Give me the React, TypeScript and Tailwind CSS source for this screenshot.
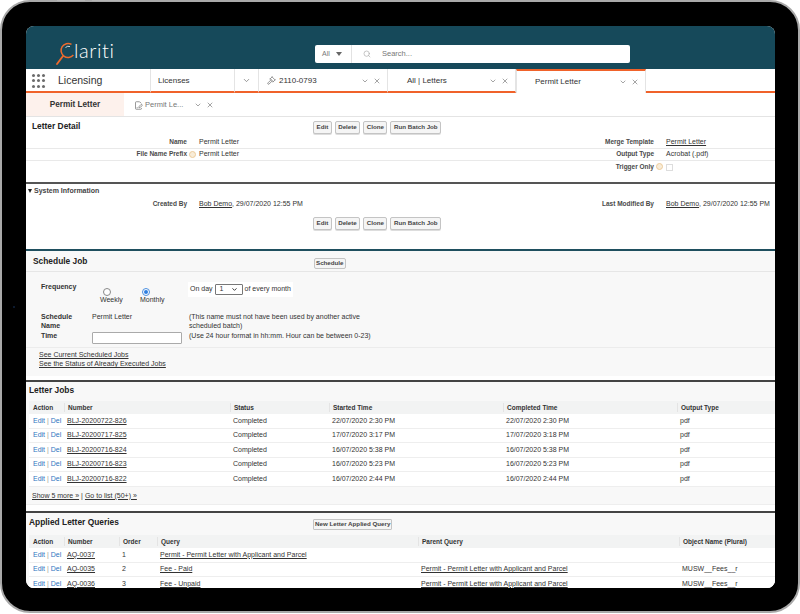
import { ChevronDown, Gavel, Search, X, FileSignature } from "lucide-react"

const jobs = [
  ["BLJ-20200722-826", "22/07/2020 2:30 PM", "22/07/2020 2:30 PM"],
  ["BLJ-20200717-825", "17/07/2020 3:17 PM", "17/07/2020 3:18 PM"],
  ["BLJ-20200716-824", "16/07/2020 5:38 PM", "16/07/2020 5:38 PM"],
  ["BLJ-20200716-823", "16/07/2020 5:23 PM", "16/07/2020 5:23 PM"],
  ["BLJ-20200716-822", "16/07/2020 2:44 PM", "16/07/2020 2:44 PM"],
]

const queries = [
  ["AQ-0037", "1", "Permit - Permit Letter with Applicant and Parcel", "", ""],
  ["AQ-0035", "2", "Fee - Paid", "Permit - Permit Letter with Applicant and Parcel", "MUSW__Fees__r"],
  ["AQ-0036", "3", "Fee - Unpaid", "Permit - Permit Letter with Applicant and Parcel", "MUSW__Fees__r"],
]

function Btn({ children }: { children: React.ReactNode }) {
  return (
    <button className="h-[13px] rounded-[2px] border border-[#c4c4c4] bg-[#f5f5f5] px-[2.5px] text-[6.2px] leading-none font-bold text-[#444] shadow-[0_1px_0_#ddd]">
      {children}
    </button>
  )
}

function ActionButtons() {
  return (
    <div className="flex gap-[3px] pl-[287px]">
      <Btn>Edit</Btn>
      <Btn>Delete</Btn>
      <Btn>Clone</Btn>
      <Btn>Run Batch Job</Btn>
    </div>
  )
}

function Help() {
  return <span className="h-[7px] w-[7px] rounded-full border border-[#eccb9a] bg-[#f8ecd8]" />
}

function Label({ children, help }: { children?: React.ReactNode; help?: boolean }) {
  return (
    <div className="flex w-[161px] shrink-0 items-center justify-end pb-[1px] text-[6.5px] font-bold text-[#4a4a4a]">
      {children}
      {help && (
        <span className="-mr-[9px] ml-[2px] flex">
          <Help />
        </span>
      )}
    </div>
  )
}

function DetailRow({ children, border = true }: { children: React.ReactNode; border?: boolean }) {
  return <div className={`flex h-[12px] items-center ${border ? "border-b border-[#e9e9e9]" : ""}`}>{children}</div>
}

function Tab({ label, icon, width, pad, active }: { label: string; icon?: React.ReactNode; width: string; pad: string; active?: boolean }) {
  return (
    <div
      className={`flex h-[24px] shrink-0 items-center gap-[3px] border-r border-[#e4e4e4] ${width} ${pad} ${
        active ? "border-l border-t-2 border-t-[#f0622a] bg-white" : "border-b-2 border-b-[#f0622a] pt-[1px]"
      }`}
    >
      {icon}
      <span className="flex-1 text-[8px] text-[#333]">{label}</span>
      <ChevronDown className="h-[8px] w-[8px] text-[#777]" />
      <X className="ml-[1px] mr-[6px] h-[8px] w-[8px] text-[#777]" />
    </div>
  )
}

function Link({ children }: { children: React.ReactNode }) {
  return <a className="text-[#333] underline">{children}</a>
}

function RowActions() {
  return (
    <span className="text-[#2f74c0]">
      Edit <span className="text-[#999]">|</span> Del
    </span>
  )
}

export default function App() {
  return (
    <div className="relative flex h-[614px] w-[800px] items-start overflow-hidden bg-white font-['Liberation_Sans',Arial,sans-serif] antialiased">
      {/* tablet frame */}
      <div className="h-[613px] w-[800px] rounded-[30px] border-2 border-[#a9a9a9] bg-black p-[24px]">
        <div className="flex h-[562px] w-[749px] flex-col overflow-hidden rounded-[8px] bg-white">
          <div className="flex h-[43px] shrink-0 items-start bg-[#16495a]">
            <div className="flex h-[43px] w-[289px] shrink-0 items-start pl-[29px] pt-[11px]">
              <svg width="20" height="30" viewBox="0 0 20 30" className="shrink-0">
                <path d="M16.5 7.4 A7 7 0 1 0 18.4 18" fill="none" stroke="#ee6a2c" strokeWidth="1.5" />
                <path d="M8 19 L2 27" stroke="#ee6a2c" strokeWidth="1.8" strokeLinecap="round" />
                <path d="M10.5 10.5 A4.5 4.5 0 0 1 15 9.5" fill="none" stroke="#fff" strokeWidth="0.8" />
              </svg>
              <span className="mt-[3px] -ml-[1px] text-[20px] leading-[20px] font-['Lato',sans-serif] font-light tracking-[0.6px] text-white">lariti</span>
            </div>
            <div className="mt-[19px] flex h-[18px] w-[315px] items-center rounded-[2px] bg-white">
              <div className="flex h-full w-[37px] items-center border-r border-[#e2e2e2] pl-[7px] text-[7px] text-[#777]">
                All
                <span className="ml-[6px] h-0 w-0 border-x-[3.5px] border-t-[4px] border-x-transparent border-t-[#666]" />
              </div>
              <Search className="ml-[11px] h-[8px] w-[8px] text-[#aaa]" />
              <span className="ml-[11px] text-[7.5px] text-[#777]">Search...</span>
            </div>
          </div>

          <div className="flex h-[24px] shrink-0 items-stretch">
            <div className="flex w-[125px] shrink-0 items-center border-r border-b-2 border-r-[#e4e4e4] border-b-[#f0622a] pt-[1px] pl-[6px]">
              <div className="grid w-[13px] grid-cols-3 gap-[2.5px]">
                {Array.from({ length: 9 }).map((_, i) => (
                  <span key={i} className="h-[3px] w-[3px] rounded-full bg-[#6b6b6b]" />
                ))}
              </div>
              <span className="ml-[13px] text-[10.5px] text-[#333]">Licensing</span>
            </div>
            <div className="flex w-[84px] shrink-0 items-center border-r border-b-2 border-r-[#e4e4e4] border-b-[#f0622a] pt-[1px] pl-[7px] text-[8px] text-[#333]">
              Licenses
            </div>
            <div className="flex w-[24px] shrink-0 items-center justify-center border-r border-b-2 border-r-[#e4e4e4] border-b-[#f0622a] pt-[1px]">
              <ChevronDown className="h-[9px] w-[9px] text-[#777]" />
            </div>
            <Tab label="2110-0793" width="w-[129px]" pad="pl-[8px]" icon={<Gavel className="h-[9px] w-[9px] text-[#777]" />} />
            <Tab label="All | Letters" width="w-[128px]" pad="pl-[19px]" />
            <Tab label="Permit Letter" width="w-[130px]" pad="pl-[18px]" active />
            <div className="flex-1 border-b-2 border-b-[#f0622a]" />
          </div>

          <div className="flex h-[24px] shrink-0 items-stretch border-b border-[#e4e4e4]">
            <div className="flex w-[98px] items-center justify-center bg-[#fdf1ec] pt-[1px] text-[8.2px] font-bold text-[#333]">Permit Letter</div>
            <div className="ml-[10px] flex items-center pt-[1px] text-[7.5px] text-[#777]">
              <FileSignature className="mr-[2px] h-[9px] w-[9px] text-[#777]" />
              Permit Le...
              <ChevronDown className="ml-[11px] h-[8px] w-[8px]" />
              <X className="ml-[4px] h-[8px] w-[8px]" />
            </div>
          </div>

          {/* letter detail */}
          <div className="flex h-[67px] shrink-0 flex-col border-b-2 border-[#555]">
            <div className="relative flex h-[20px] shrink-0 items-center pb-[2px]">
              <span className="ml-[6px] text-[8.4px] font-bold text-[#222]">Letter Detail</span>
              <div className="absolute inset-x-0 top-[4px]">
                <ActionButtons />
              </div>
            </div>
            <DetailRow>
              <Label>Name</Label>
              <div className="w-[306px] pl-[12px] text-[7px] text-[#333]">Permit Letter</div>
              <Label>Merge Template</Label>
              <div className="pl-[12px] text-[7px] text-[#333]">
                <Link>Permit Letter</Link>
              </div>
            </DetailRow>
            <DetailRow>
              <Label help>File Name Prefix</Label>
              <div className="w-[306px] pl-[12px] text-[7px] text-[#333]">Permit Letter</div>
              <Label>Output Type</Label>
              <div className="pl-[12px] text-[7px] text-[#333]">Acrobat (.pdf)</div>
            </DetailRow>
            <DetailRow border={false}>
              <Label />
              <div className="w-[306px]" />
              <Label help>Trigger Only</Label>
              <div className="pl-[12px]">
                <span className="block h-[7px] w-[7px] border border-[#ddd] bg-white" />
              </div>
            </DetailRow>
          </div>

          {/* system information */}
          <div className="h-[67px] shrink-0 border-b-2 border-[#1f4f5f]">
            <div className="flex h-[14px] items-center pl-[2px] text-[7px] font-bold text-[#444]">
              <span className="mr-[2px] h-0 w-0 border-x-[2.5px] border-t-[4px] border-x-transparent border-t-[#222]" />
              System Information
            </div>
            <div className="flex h-[12px] items-center">
              <Label>Created By</Label>
              <div className="w-[306px] pl-[12px] text-[7px] text-[#333]">
                <Link>Bob Demo</Link>, 29/07/2020 12:55 PM
              </div>
              <Label>Last Modified By</Label>
              <div className="pl-[12px] text-[7px] whitespace-nowrap text-[#333]">
                <Link>Bob Demo</Link>, 29/07/2020 12:55 PM
              </div>
            </div>
            <div className="mt-[7px]">
              <ActionButtons />
            </div>
          </div>

          {/* schedule job */}
          <div className="flex h-[131px] shrink-0 flex-col border-b-2 border-[#444]">
            <div className="h-[125px] bg-[#f8f8f8]">
              <div className="relative flex h-[21px] items-center border-b border-[#e6e6e6] pt-[1px] pl-[7px] text-[8.4px] font-bold text-[#222]">
                Schedule Job
                <div className="absolute top-[5px] left-[288px]">
                  <button className="h-[11px] rounded-[2px] border border-[#c4c4c4] bg-[#f5f5f5] px-[1px] text-[6.2px] leading-none font-bold text-[#444]">
                    Schedule
                  </button>
                </div>
              </div>
              <div className="flex h-[40px] pt-[9px] pl-[15px] text-[7px] text-[#333]">
                <div className="w-[59px] pt-[1px] font-bold">Frequency</div>
                <div className="flex w-[40px] flex-col items-start pt-[7px]">
                  <span className="ml-[3px] h-[8px] w-[8px] rounded-full border border-[#888] bg-white" />
                  <span className="-mt-[1px]">Weekly</span>
                </div>
                <div className="flex w-[48px] flex-col items-start pt-[7px]">
                  <span className="ml-[2px] flex h-[8px] w-[8px] items-center justify-center rounded-full border border-[#4a8fe0] bg-white">
                    <span className="h-[4px] w-[4px] rounded-full bg-[#2f7fe0]" />
                  </span>
                  <span className="-mt-[1px]">Monthly</span>
                </div>
                <div className="mt-[1px] flex h-[15px] items-center bg-white pr-[2px] pl-[2px]">
                  On day
                  <span className="mx-[2px] flex h-[11px] w-[28px] items-center justify-between rounded-[1px] border border-[#777] bg-white px-[4px]">
                    1
                    <ChevronDown className="h-[7px] w-[7px] text-[#222]" strokeWidth={3} />
                  </span>
                  of every month
                </div>
              </div>
              <div className="flex h-[19px] pl-[15px] text-[7px] leading-[9px] text-[#333]">
                <div className="w-[51px] font-bold">
                  Schedule
                  <br />
                  Name
                </div>
                <div className="w-[97px]">Permit Letter</div>
                <div>
                  (This name must not have been used by another active
                  <br />
                  scheduled batch)
                </div>
              </div>
              <div className="flex h-[17px] border-b border-[#ececec] pl-[15px] text-[7px] leading-[10px] text-[#333]">
                <div className="w-[51px] font-bold">Time</div>
                <div className="w-[97px] pt-[1px]">
                  <span className="block h-[12px] w-[90px] rounded-[1px] border border-[#aaa] bg-white" />
                </div>
                <div>(Use 24 hour format in hh:mm. Hour can be between 0-23)</div>
              </div>
              <div className="flex flex-col pt-[2px] pl-[13px] text-[7px] leading-[9px]">
                <Link>See Current Scheduled Jobs</Link>
                <Link>See the Status of Already Executed Jobs</Link>
              </div>
            </div>
          </div>

          {/* letter jobs */}
          <div className="h-[131px] shrink-0 border-b-2 border-[#444]">
            <div className="h-[123px] border-b border-[#eee] bg-[#f8f8f8] pl-[3px]">
              <div className="flex h-[19px] items-center pb-[3px] text-[8.4px] font-bold text-[#222]">Letter Jobs</div>
              <div className="grid h-[13px] grid-cols-[35px_166px_99px_174px_174px_1fr] items-center bg-[#f2f3f3] text-[6.5px] font-bold text-[#333]">
                <div className="pl-[4px]">Action</div>
                <div className="border-l border-[#e4e4e4] pl-[3px]">Number</div>
                <div className="border-l border-[#e4e4e4] pl-[3px]">Status</div>
                <div className="border-l border-[#e4e4e4] pl-[3px]">Started Time</div>
                <div className="border-l border-[#e4e4e4] pl-[3px]">Completed Time</div>
                <div className="border-l border-[#e4e4e4] pl-[3px]">Output Type</div>
              </div>
              {jobs.map((j) => (
                <div key={j[0]} className="grid h-[14.6px] grid-cols-[35px_166px_99px_174px_174px_1fr] items-center border-b border-[#eee] bg-white text-[7px] text-[#333]">
                  <div className="pl-[4px] whitespace-nowrap">
                    <RowActions />
                  </div>
                  <div className="pl-[3px]">
                    <Link>{j[0]}</Link>
                  </div>
                  <div className="pl-[3px]">Completed</div>
                  <div className="pl-[3px]">{j[1]}</div>
                  <div className="pl-[3px]">{j[2]}</div>
                  <div className="pl-[3px]">pdf</div>
                </div>
              ))}
              <div className="flex h-[18px] items-center pl-[3px] text-[7px] text-[#333]">
                <Link>Show 5 more »</Link>
                <span className="mx-[2px]">|</span>
                <Link>Go to list (50+) »</Link>
              </div>
            </div>
          </div>

          {/* applied letter queries */}
          <div className="flex-1 bg-[#f8f8f8] pl-[3px]">
            <div className="relative flex h-[22px] items-start pt-[3px] text-[8.4px] font-bold text-[#222]">
              Applied Letter Queries
              <div className="absolute top-[4px] left-[284px]">
                <button className="h-[11px] rounded-[1px] border border-[#c4c4c4] bg-[#f5f5f5] px-[1px] text-[6.2px] leading-none font-bold text-[#444]">
                  New Letter Applied Query
                </button>
              </div>
            </div>
            <div className="grid h-[13px] grid-cols-[35px_55px_38px_261px_261px_1fr] items-center bg-[#f2f3f3] text-[6.5px] font-bold text-[#333]">
              <div className="pl-[4px]">Action</div>
              <div className="border-l border-[#e4e4e4] pl-[3px]">Number</div>
              <div className="border-l border-[#e4e4e4] pl-[3px]">Order</div>
              <div className="border-l border-[#e4e4e4] pl-[3px]">Query</div>
              <div className="border-l border-[#e4e4e4] pl-[3px]">Parent Query</div>
              <div className="border-l border-[#e4e4e4] pl-[3px]">Object Name (Plural)</div>
            </div>
            {queries.map((q) => (
              <div key={q[0]} className="grid h-[14.6px] grid-cols-[35px_55px_38px_261px_261px_1fr] items-center border-b border-[#eee] bg-white text-[7px] text-[#333]">
                <div className="pl-[4px] whitespace-nowrap">
                  <RowActions />
                </div>
                <div className="pl-[3px]">
                  <Link>{q[0]}</Link>
                </div>
                <div className="pl-[3px]">{q[1]}</div>
                <div className="pl-[3px]">
                  <Link>{q[2]}</Link>
                </div>
                <div className="pl-[3px]">{q[3] && <Link>{q[3]}</Link>}</div>
                <div className="pl-[3px]">{q[4]}</div>
              </div>
            ))}
          </div>
        </div>
      </div>
      {/* camera dot and the hardware buttons on the top edge */}
      <span className="absolute top-[306px] left-[13px] h-[2px] w-[2px] rounded-full bg-[#10233f]" />
      <span className="absolute top-0 left-[57px] h-[1px] w-[28px] bg-[#b5b5b5]" />
      <span className="absolute top-0 left-[92px] h-[1px] w-[28px] bg-[#b5b5b5]" />
    </div>
  )
}
